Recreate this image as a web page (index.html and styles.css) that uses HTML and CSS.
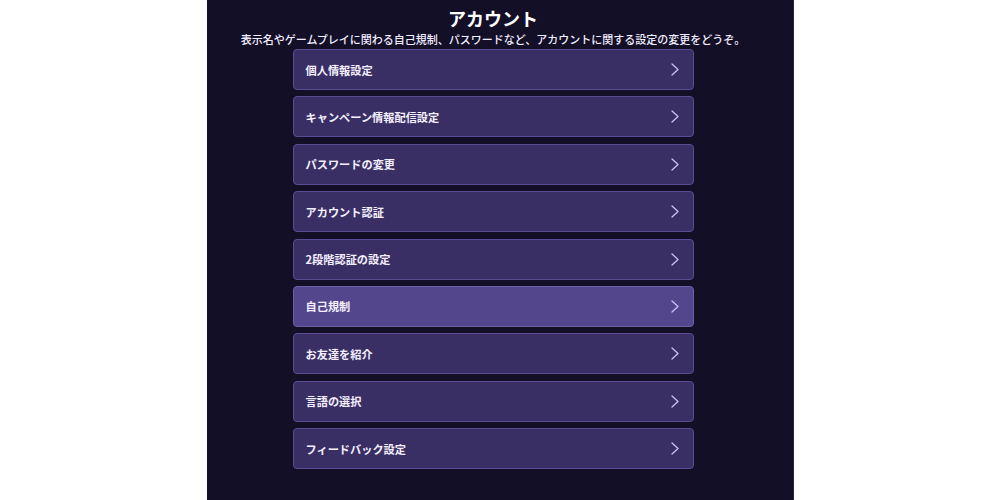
FILE: index.html
```html
<!DOCTYPE html>
<html lang="ja">
<head>
<meta charset="utf-8">
<link rel="stylesheet" href="styles.css">
</head>
<body>
<main class="panel">
  <h1 class="title">アカウント</h1>
  <p class="subtitle">表示名やゲームプレイに関わる自己規制、パスワードなど、アカウントに関する設定の変更をどうぞ。</p>
  <ul class="menu">
    <li class="item"><span>個人情報設定</span><svg class="chev" viewBox="0 0 8 13"><path d="M1 1l6 5.5L1 12"/></svg></li>
    <li class="item"><span>キャンペーン情報配信設定</span><svg class="chev" viewBox="0 0 8 13"><path d="M1 1l6 5.5L1 12"/></svg></li>
    <li class="item"><span>パスワードの変更</span><svg class="chev" viewBox="0 0 8 13"><path d="M1 1l6 5.5L1 12"/></svg></li>
    <li class="item"><span>アカウント認証</span><svg class="chev" viewBox="0 0 8 13"><path d="M1 1l6 5.5L1 12"/></svg></li>
    <li class="item"><span>2段階認証の設定</span><svg class="chev" viewBox="0 0 8 13"><path d="M1 1l6 5.5L1 12"/></svg></li>
    <li class="item active"><span>自己規制</span><svg class="chev" viewBox="0 0 8 13"><path d="M1 1l6 5.5L1 12"/></svg></li>
    <li class="item"><span>お友達を紹介</span><svg class="chev" viewBox="0 0 8 13"><path d="M1 1l6 5.5L1 12"/></svg></li>
    <li class="item"><span>言語の選択</span><svg class="chev" viewBox="0 0 8 13"><path d="M1 1l6 5.5L1 12"/></svg></li>
    <li class="item"><span>フィードバック設定</span><svg class="chev" viewBox="0 0 8 13"><path d="M1 1l6 5.5L1 12"/></svg></li>
  </ul>
</main>
</body>
</html>
```
FILE: styles.css
```css
html, body {
  margin: 0;
  padding: 0;
  background: #ffffff;
  height: 100%;
}
body {
  font-family: "Noto Sans CJK JP", "Noto Sans", sans-serif;
  color: #f2eeff;
}
.panel {
  box-sizing: border-box;
  width: 587px;
  height: 500px;
  margin: 0 auto;
  background: #130f27;
  border-right: 1px solid #2a2540;
  padding: 6px 13px 0 0;
  display: flex;
  flex-direction: column;
  align-items: center;
}
.title {
  margin: 0;
  font-size: 18px;
  line-height: 24px;
  font-weight: 700;
  color: #ffffff;
}
.subtitle {
  margin: 0;
  font-size: 11px;
  line-height: 19px;
  font-weight: 500;
  color: #f2eeff;
}
.menu {
  list-style: none;
  margin: 0;
  padding: 0;
  width: 401px;
  display: flex;
  flex-direction: column;
  gap: 6.4px;
}
.item {
  box-sizing: border-box;
  height: 41px;
  display: flex;
  align-items: center;
  justify-content: space-between;
  padding: 0 14px 0 12px;
  background: #3a2f64;
  border: 1px solid #5a4b92;
  border-radius: 4px;
  font-size: 11.2px;
  font-weight: 700;
  color: #f4f0ff;
}
.item.active {
  background: #53468c;
  border-color: #6d5eaa;
}
.chev {
  width: 8px;
  height: 13px;
  fill: none;
  stroke: #cdbff5;
  stroke-width: 1.3;
  stroke-linecap: round;
  stroke-linejoin: round;
}
```
